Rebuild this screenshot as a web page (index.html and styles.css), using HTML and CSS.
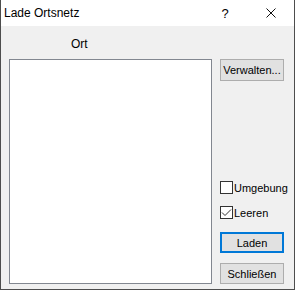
FILE: index.html
```html
<!DOCTYPE html>
<html lang="de">
<head>
	<meta charset="UTF-8">
	<title>Lade Ortsnetz</title>
	<link rel="stylesheet" href="styles.css">
</head>
<body>
<div class="window">
    <div class="titlebar">
        <span class="title">Lade Ortsnetz</span>
        <span class="tb-btn">?</span>
        <span class="tb-btn">
            <svg width="10" height="10" viewBox="0 0 10 10"><path d="M0.5 0.5L9.5 9.5M9.5 0.5L0.5 9.5" stroke="#111" stroke-width="1" fill="none"/></svg>
        </span>
    </div>
    <div class="client">
        <div class="left">
            <div class="label">Ort</div>
            <div class="list"></div>
        </div>
        <div class="right">
            <button class="btn">Verwalten...</button>
            <div class="spacer"></div>
            <label class="check"><span class="box"></span>Umgebung</label>
            <label class="check"><span class="box"><svg width="11" height="11" viewBox="0 0 11 11"><path d="M1 5.5L4 8.5L10 2.5" stroke="#333" stroke-width="1" fill="none"/></svg></span>Leeren</label>
            <button class="btn default">Laden</button>
            <button class="btn">Schließen</button>
        </div>
    </div>
</div>
</body>
</html>
```

FILE: styles.css
```css
body,html{
    padding: 0;
    margin: 0;
    font-family: "Liberation Sans", Arial, sans-serif;
    font-size: 11px;
    color: #000000;
}
.window{
    width: 295px;
    height: 290px;
    box-sizing: border-box;
    border: 1px solid #4d4d4d;
    border-top: 0;
    display: flex;
    flex-direction: column;
    background: #f0f0f0;
}
.titlebar{
    height: 26px;
    background: #ffffff;
    display: flex;
    align-items: center;
    flex-shrink: 0;
}
.title{
    flex: 1;
    padding-left: 3px;
    font-size: 12px;
}
.tb-btn{
    width: 46px;
    height: 26px;
    display: flex;
    align-items: center;
    justify-content: center;
    font-size: 13px;
}
.client{
    flex: 1;
    display: flex;
    padding: 0 0 5px 8px;
}
.left{
    width: 203px;
    flex-shrink: 0;
    display: flex;
    flex-direction: column;
}
.label{
    height: 33px;
    line-height: 16px;
    padding-top: 10px;
    box-sizing: border-box;
    padding-left: 62px;
    font-size: 12px;
}
.list{
    flex: 1;
    background: #ffffff;
    border: 1px solid #828790;
}
.right{
    flex: 1;
    margin-left: 8px;
    padding-top: 33px;
    display: flex;
    flex-direction: column;
}
.spacer{
    flex: 1;
}
.btn{
    width: 64px;
    height: 22px;
    padding: 0;
    margin: 0;
    background: #e1e1e1;
    border: 1px solid #adadad;
    font-family: inherit;
    font-size: 11px;
    color: #000000;
}
.btn.default{
    height: 21px;
    border: 2px solid #0078d7;
    margin-top: 13px;
    margin-bottom: 10px;
}
.btn:last-child{
    height: 21px;
}
.check{
    display: flex;
    align-items: center;
    height: 13px;
    margin-bottom: 12px;
    white-space: nowrap;
}
.check:last-of-type{
    margin-bottom: 0;
}
.box{
    width: 13px;
    height: 13px;
    flex-shrink: 0;
    box-sizing: border-box;
    border: 1px solid #333333;
    background: #ffffff;
    margin-right: 1px;
    display: flex;
    align-items: center;
    justify-content: center;
}
```
